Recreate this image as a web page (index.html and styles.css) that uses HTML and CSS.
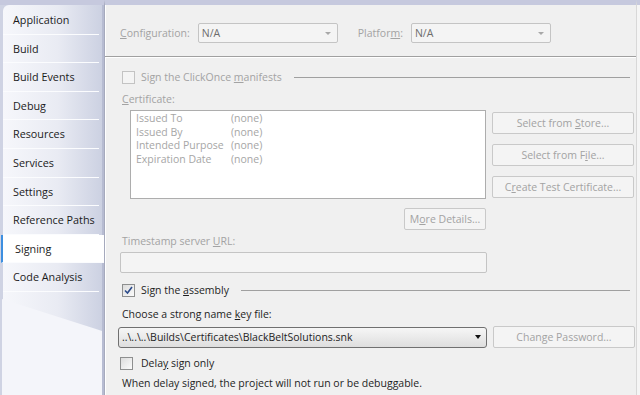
FILE: index.html
```html
<!DOCTYPE html>
<html lang="en">
<head>
    <meta charset="UTF-8">
    <title>Signing</title>
    <link rel="stylesheet" href="styles.css">
</head>
<body>
    <div class="tabs">
        <div class="tab-list">
            <div class="tab">Application</div>
            <div class="tab">Build</div>
            <div class="tab">Build Events</div>
            <div class="tab">Debug</div>
            <div class="tab">Resources</div>
            <div class="tab">Services</div>
            <div class="tab">Settings</div>
            <div class="tab">Reference Paths</div>
            <div class="tab selected">Signing</div>
            <div class="tab">Code Analysis</div>
        </div>
        <div class="tab-tail"></div>
    </div>

    <div class="panel">
        <div class="config-row">
            <span class="label muted"><u>C</u>onfiguration:</span>
            <div class="combo disabled"><span>N/A</span><span class="arrow"></span></div>
            <span class="label muted platform">Platfor<u>m</u>:</span>
            <div class="combo disabled"><span>N/A</span><span class="arrow"></span></div>
        </div>
        <div class="rule"></div>

        <div class="group-row clickonce">
            <span class="check disabled"></span>
            <span class="muted">Sign the ClickOnce <u>m</u>anifests</span>
            <span class="line"></span>
        </div>

        <div class="label muted cert-label"><u>C</u>ertificate:</div>
        <div class="cert-row">
            <div class="cert-box">
                <div class="cert-line"><span class="key">Issued To</span><span>(none)</span></div>
                <div class="cert-line"><span class="key">Issued By</span><span>(none)</span></div>
                <div class="cert-line"><span class="key">Intended Purpose</span><span>(none)</span></div>
                <div class="cert-line"><span class="key">Expiration Date</span><span>(none)</span></div>
            </div>
            <div class="cert-buttons">
                <div class="button"><span>Select from <u>S</u>tore...</span></div>
                <div class="button"><span>Select from F<u>i</u>le...</span></div>
                <div class="button"><span>C<u>r</u>eate Test Certificate...</span></div>
            </div>
        </div>
        <div class="details-row">
            <div class="button small"><span>M<u>o</u>re Details...</span></div>
        </div>

        <div class="label muted ts-label">Timestamp server <u>U</u>RL:</div>
        <div class="textbox"></div>

        <div class="group-row assembly">
            <span class="check checked">
                <svg width="9" height="9" viewBox="0 0 9 9"><path d="M1 4.5 L3.5 7 L8 1" fill="none" stroke="#2b4a8a" stroke-width="1.6"/></svg>
            </span>
            <span>Sign the <u>a</u>ssembly</span>
            <span class="line"></span>
        </div>

        <div class="label key-label">Choose a strong name <u>k</u>ey file:</div>
        <div class="key-row">
            <div class="combo active"><span>..\..\..\Builds\Certificates\BlackBeltSolutions.snk</span><span class="arrow"></span></div>
            <div class="button"><span>Change Password...</span></div>
        </div>

        <div class="group-row delay">
            <span class="check"></span>
            <span>Dela<u>y</u> sign only</span>
        </div>
        <div class="note">When delay signed, the project will not run or be debuggable.</div>
    </div>
    <div class="edge"></div>
</body>
</html>
```
FILE: styles.css
```css
body {
    margin: 0;
    width: 640px;
    height: 395px;
    overflow: hidden;
    display: flex;
    background: #f0f0f0;
    font-family: "Open Sans", "Noto Sans", sans-serif;
    font-size: 10.5px;
    color: #1e1e1e;
}
u {
    text-decoration: underline;
    text-underline-offset: 1px;
}
.muted {
    color: #a3a3a3;
}

/* left tab strip */
.tabs {
    width: 104px;
    flex: none;
    display: flex;
    flex-direction: column;
    background: #cfd3e3;
    border-top: 5px solid #c6c9de;
    box-sizing: border-box;
}
.tab-list {
    margin-left: 3px;
    border-right: 2px solid #b7bcd2;
    border-top-left-radius: 6px;
    background: linear-gradient(to right, #f6f7fb, #e9ebf3 55%, #ccd1e2);
    padding-top: 1px;
}
.tab {
    height: 28.6px;
    line-height: 28px;
    padding-left: 10px;
    font-size: 10.8px;
    white-space: nowrap;
    color: #1b1b1b;
    box-sizing: border-box;
    border-bottom: 1px solid #fbfcfe;
    margin-right: 3px;
}
.tab.selected {
    background: #fff;
    margin-right: -3px;
    margin-left: -2px;
    padding-left: 12px;
    border-left: 2px solid #3d8fe0;
}
.tab-tail {
    flex: 1;
    margin-left: 3px;
    border-right: 2px solid #b7bcd2;
    background: linear-gradient(to right, #f6f7fb, #e9ebf3 55%, #ccd1e2);
    position: relative;
}
.tab-tail::after {
    content: "";
    position: absolute;
    left: -1px;
    right: 0;
    top: 7px;
    bottom: 0;
    background: #f4f5fa;
    clip-path: polygon(0 0, 94% 30px, 100% 32px, 100% 100%, 0 100%);
}

/* main panel */
.panel {
    width: 532px;
    flex: none;
    box-sizing: border-box;
    border-top: 5px solid #c6c9de;
    border-left: 1px solid #a6aabd;
    box-shadow: inset 1px 0 #ffffff;
    padding-top: 18px;
}
.edge {
    flex: 1;
    border-top: 5px solid #c6c9de;
    border-left: 1px solid #d8d8d8;
    background: #f5f5f5;
}
.config-row {
    display: flex;
    align-items: center;
    padding-left: 15px;
}
.label {
    line-height: 14px;
}
.platform {
    margin-left: 20px;
}
.combo {
    display: flex;
    align-items: center;
    justify-content: space-between;
    height: 20px;
    box-sizing: border-box;
    border: 1px solid #c4c4c4;
    border-radius: 2px;
    background: #f4f4f4;
    padding: 0 6px 0 3px;
    margin-left: 8px;
    width: 140px;
}
.combo.disabled {
    color: #6d6d6d;
}
.arrow {
    width: 0;
    height: 0;
    border-left: 3px solid transparent;
    border-right: 3px solid transparent;
    border-top: 3px solid #a8a8a8;
}
.rule {
    height: 1px;
    background: #a0a0a0;
    border-bottom: 1px solid #fff;
    margin-top: 13px;
}

.group-row {
    display: flex;
    align-items: center;
    gap: 6px;
    padding-left: 17px;
    padding-right: 6px;
    height: 14px;
}
.group-row .line {
    flex: 1;
    height: 1px;
    background: #a0a0a0;
    margin-left: 6px;
}
.clickonce {
    margin-top: 12px;
}
.check {
    width: 11px;
    height: 11px;
    border: 1px solid #8e8f8f;
    background: linear-gradient(135deg, #dcdcdc, #fbfbfb);
    display: flex;
    align-items: center;
    justify-content: center;
    flex: none;
}
.check.disabled {
    border-color: #c3c3c3;
    background: #f4f4f4;
}

.cert-label {
    padding-left: 17px;
    margin-top: 8px;
}
.cert-row {
    display: flex;
    gap: 6px;
    padding-left: 25px;
    margin-top: 4px;
}
.cert-box {
    width: 356px;
    height: 89px;
    box-sizing: border-box;
    border: 1px solid #adadad;
    background: #fff;
    padding: 1px 5px;
    color: #a6a6a6;
}
.cert-line {
    display: flex;
    line-height: 13.5px;
}
.cert-line .key {
    width: 95px;
}
.cert-buttons {
    display: flex;
    flex-direction: column;
    gap: 10px;
    padding-top: 2px;
}
.button {
    width: 142px;
    height: 22px;
    box-sizing: border-box;
    border: 1px solid #c9c9c9;
    border-radius: 2px;
    background: #f4f4f4;
    color: #a3a3a3;
    display: flex;
    align-items: center;
    justify-content: center;
}
.details-row {
    display: flex;
    padding-left: 299px;
    margin-top: 9px;
}
.button.small {
    width: 82px;
}

.ts-label {
    padding-left: 17px;
    margin-top: 4px;
}
.textbox {
    margin: 4px 0 0 15px;
    width: 367px;
    height: 21px;
    box-sizing: border-box;
    border: 1px solid #c4c4c4;
    border-radius: 2px;
    background: #f4f4f4;
}
.assembly {
    margin-top: 10px;
}

.key-label {
    padding-left: 17px;
    margin-top: 10px;
}
.key-row {
    display: flex;
    align-items: center;
    gap: 6px;
    padding-left: 13px;
    margin-top: 5px;
}
.combo.active {
    margin-left: 0;
    width: 369px;
    height: 21px;
    border-color: #707070;
    border-radius: 3px;
    background: linear-gradient(#f6f6f6, #dedede);
    color: #1e1e1e;
    padding-right: 5px;
}
.combo.active .arrow {
    border-left-width: 3.5px;
    border-right-width: 3.5px;
    border-top: 4px solid #111;
}
.delay {
    margin-top: 8px;
    padding-left: 15px;
    gap: 8px;
}
.note {
    padding-left: 17px;
    margin-top: 6px;
    line-height: 14px;
}
```
